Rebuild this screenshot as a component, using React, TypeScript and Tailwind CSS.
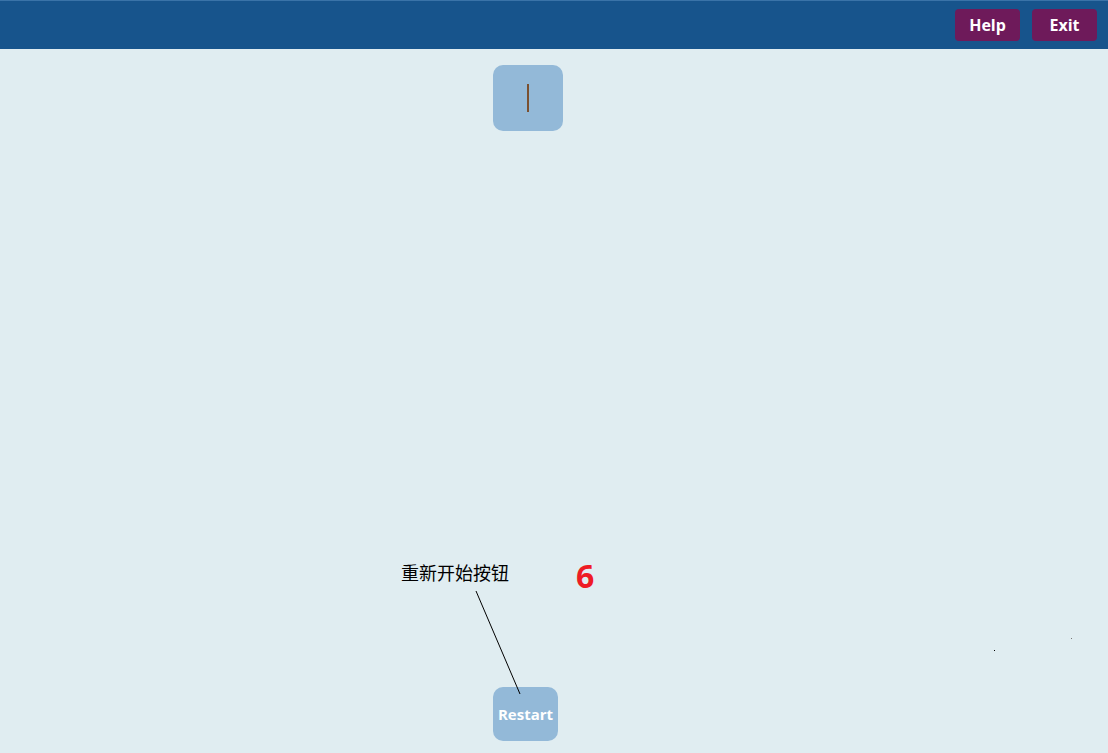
export default function App() {
  return (
    <div className="relative flex h-[753px] w-[1108px] flex-col overflow-hidden bg-[#e0edf1] font-['Open_Sans','Liberation_Sans',sans-serif]">
      {/* Header */}
      <header className="flex h-[49px] items-center justify-end gap-3 border-t border-[#3a73a8] bg-[#17548c] pr-[11px]">
        <button className="h-[32px] w-[65px] rounded-[4px] bg-[#6e1a5a] text-[16px] font-bold text-white">
          Help
        </button>
        <button className="h-[32px] w-[65px] rounded-[4px] bg-[#6e1a5a] text-[16px] font-bold text-white">
          Exit
        </button>
      </header>

      {/* Main */}
      <main className="flex flex-1 flex-col justify-between pb-[12px] pl-[493px] pt-[16px]">
        <div className="flex h-[66px] w-[70px] items-center justify-center rounded-[10px] bg-[#93b9d8]">
          <div className="h-[28px] w-[2px] bg-[#7a5030]" />
        </div>
        <button className="flex h-[54px] w-[65px] items-center justify-center rounded-[10px] bg-[#93b9d8] text-[15px] font-bold text-white">
          Restart
        </button>
      </main>

      {/* Annotation */}
      <div className="absolute left-[401px] top-[559px] font-['Noto_Sans_CJK_SC',sans-serif] text-[18px] text-black">
        重新开始按钮
      </div>
      <div className="absolute left-[576px] top-[556px] font-['Open_Sans','Liberation_Sans',sans-serif] text-[32px] font-bold leading-[40px] text-[#ee1c25]">
        6
      </div>
      <svg className="pointer-events-none absolute left-0 top-0" width="1108" height="753">
        <line x1="476" y1="591" x2="520" y2="694" stroke="#000" strokeWidth="1" />
        <rect x="994" y="650" width="1" height="1" fill="#000" />
        <rect x="1071" y="638" width="1" height="1" fill="#777" />
      </svg>
    </div>
  );
}
